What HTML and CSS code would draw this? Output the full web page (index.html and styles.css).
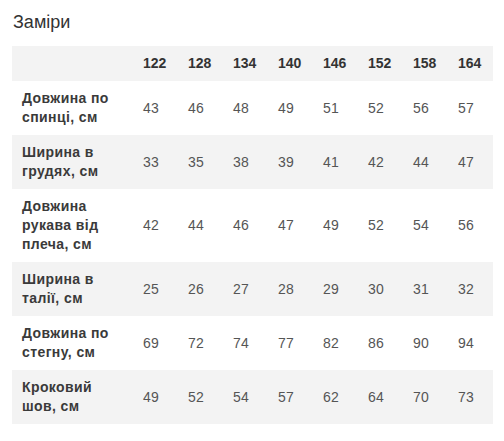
FILE: index.html
```html
<!DOCTYPE html>
<html>
<head>
<meta charset="utf-8">
<link rel="stylesheet" href="styles.css">
</head>
<body>
<h2 class="title">Заміри</h2>
<table class="sizes">
  <thead>
    <tr><th class="label"></th><th>122</th><th>128</th><th>134</th><th>140</th><th>146</th><th>152</th><th>158</th><th>164</th></tr>
  </thead>
  <tbody>
    <tr><th class="label">Довжина по спинці, см</th><td>43</td><td>46</td><td>48</td><td>49</td><td>51</td><td>52</td><td>56</td><td>57</td></tr>
    <tr><th class="label">Ширина в грудях, см</th><td>33</td><td>35</td><td>38</td><td>39</td><td>41</td><td>42</td><td>44</td><td>47</td></tr>
    <tr><th class="label">Довжина рукава від плеча, см</th><td>42</td><td>44</td><td>46</td><td>47</td><td>49</td><td>52</td><td>54</td><td>56</td></tr>
    <tr><th class="label">Ширина в талії, см</th><td>25</td><td>26</td><td>27</td><td>28</td><td>29</td><td>30</td><td>31</td><td>32</td></tr>
    <tr><th class="label">Довжина по стегну, см</th><td>69</td><td>72</td><td>74</td><td>77</td><td>82</td><td>86</td><td>90</td><td>94</td></tr>
    <tr><th class="label">Кроковий шов, см</th><td>49</td><td>52</td><td>54</td><td>57</td><td>62</td><td>64</td><td>70</td><td>73</td></tr>
  </tbody>
</table>
</body>
</html>
```

FILE: styles.css
```css
html, body {
  margin: 0;
  padding: 0;
  background: #fff;
}
body {
  padding: 10px 11px 0 12px;
  font-family: "Liberation Sans", Arial, sans-serif;
  color: #333;
}
.title {
  margin: 0 0 0 1px;
  font-size: 18px;
  font-weight: normal;
  line-height: 24px;
  color: #333;
}
.sizes {
  margin-top: 12px;
  width: 481px;
  border-collapse: collapse;
  table-layout: fixed;
  font-size: 14px;
  line-height: 19px;
}
.sizes th, .sizes td {
  padding: 8px 0 8px 10px;
  text-align: left;
  vertical-align: middle;
}
.sizes th {
  width: 35px;
  font-weight: bold;
  color: #333;
}
.sizes th.label {
  width: 99px;
  padding-right: 12px;
  letter-spacing: 0.4px;
  color: #3a3a3a;
}
.sizes td {
  color: #555;
  letter-spacing: 0.2px;
}
.sizes thead tr,
.sizes tbody tr:nth-child(even) {
  background: #f3f3f3;
}
```
